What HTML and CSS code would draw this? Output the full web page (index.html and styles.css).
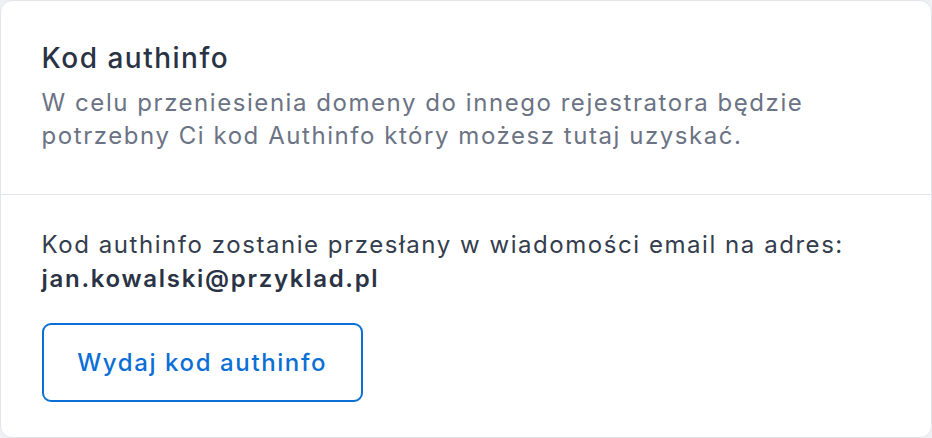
FILE: index.html
```html
<!DOCTYPE html>
<html lang="pl">
<head>
<meta charset="utf-8">
<title>Kod authinfo</title>
<link rel="stylesheet" href="styles.css">
</head>
<body>
<section class="card">
  <header class="card-header">
    <h2 class="card-title">Kod authinfo</h2>
    <p class="card-desc">W celu przeniesienia domeny do innego rejestratora będzie potrzebny Ci kod Authinfo który możesz tutaj uzyskać.</p>
  </header>
  <div class="card-body">
    <p class="info">Kod authinfo zostanie przesłany w wiadomości email na adres: <strong class="email">jan.kowalski@przyklad.pl</strong></p>
    <button class="btn" type="button">Wydaj kod authinfo</button>
  </div>
</section>
</body>
</html>
```

FILE: styles.css
```css
* { box-sizing: border-box; }
html, body { margin: 0; padding: 0; }
body {
  background: #eef0f3;
  font-family: Inter, "Noto Sans", sans-serif;
  width: 932px;
  height: 438px;
}
.card {
  width: 932px;
  height: 438px;
  background: #ffffff;
  border: 1.4px solid #e2e5ea;
  border-radius: 12px;
  display: flex;
  flex-direction: column;
}
.card-header {
  padding: 37.8px 39.2px 41.5px 40.6px;
  border-bottom: 1.4px solid #e2e5ea;
}
.card-title {
  margin: 0;
  font-size: 28px;
  line-height: 39.2px;
  letter-spacing: 1.5px;
  font-weight: 500;
  color: #2a3344;
}
.card-desc {
  margin: 8.1px 0 0;
  font-size: 24px;
  line-height: 33px;
  letter-spacing: 1.55px;
  color: #6b7384;
}
.card-body {
  padding: 33px 39.2px 33.6px 40.6px;
  display: flex;
  flex-direction: column;
  align-items: flex-start;
}
.info {
  margin: 0;
  font-size: 24px;
  line-height: 34px;
  letter-spacing: 1.55px;
  color: #333d4d;
}
.email {
  font-weight: 600;
  letter-spacing: 1.7px;
  color: #2a3344;
}
.btn {
  margin-top: 27.5px;
  height: 79px;
  padding: 0 33.6px;
  border: 2px solid #0b6fd6;
  border-radius: 9px;
  background: #ffffff;
  color: #0b6fd6;
  font-family: inherit;
  font-size: 24px;
  line-height: 33.6px;
  letter-spacing: 1.6px;
  font-weight: 500;
}
```
